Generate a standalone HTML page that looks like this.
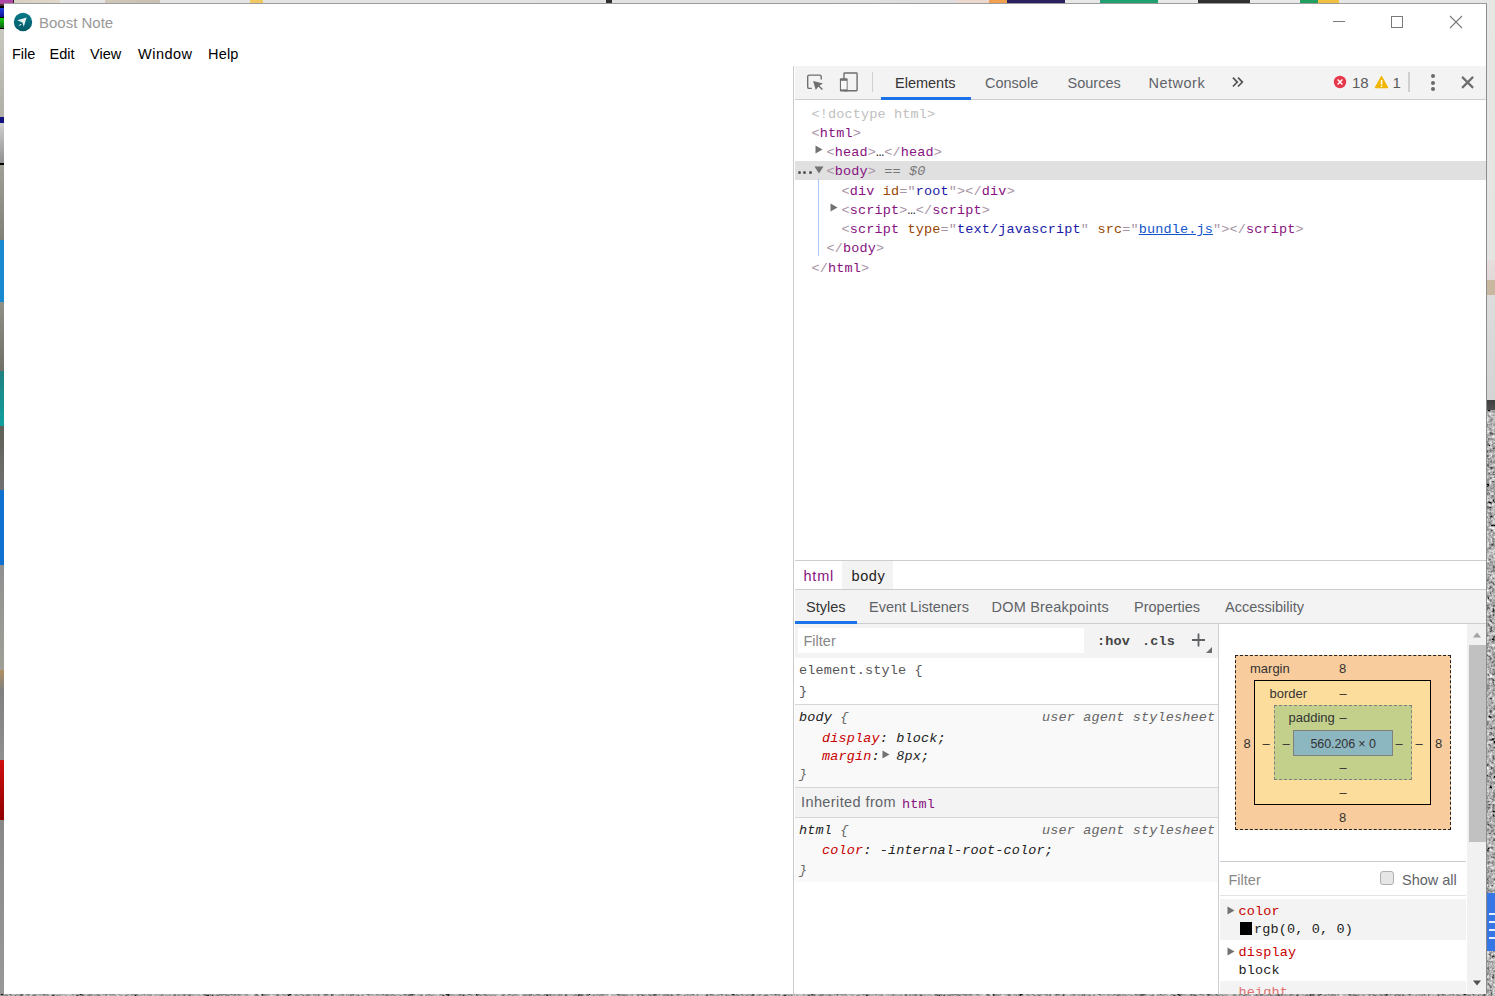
<!DOCTYPE html>
<html><head><meta charset="utf-8"><title>Boost Note</title>
<style>
html,body{margin:0;padding:0;width:1495px;height:996px;overflow:hidden;background:#909090;}
.t{position:absolute;white-space:pre;}
</style></head><body>
<div style="position:absolute;left:0px;top:0px;width:4px;height:996px;background:linear-gradient(to bottom,#b048a8 0px,#b048a8 4px,#503038 4px,#503038 6px,#000 6px,#000 8px,#2040e0 8px,#101090 17px,#000 17px,#000 18px,#10d010 18px,#106010 28px,#000 28px,#000 29px,#c8c8c0 29px,#b0b0a8 117px,#101080 117px,#101080 123px,#d0d0d0 123px,#909090 163px,#000 163px,#000 165px,#a0a098 165px,#808078 240px,#1888d0 240px,#1888d0 302px,#909088 302px,#707068 371px,#208080 371px,#10a0a0 426px,#606058 426px,#707070 490px,#1070d0 490px,#1070d0 565px,#909090 565px,#a0a098 670px,#b09060 670px,#808080 690px,#909090 760px,#d01010 760px,#900000 820px,#888 820px,#999 996px)"></div>
<div style="position:absolute;left:0px;top:0px;width:1495px;height:3px;background:linear-gradient(to right,#b048a8 0,#b048a8 13px,#222 13px,#222 14px,#d8d0c0 14px,#e0d8c8 60px,#e6e6e6 60px,#e6e6e6 105px,#d0c8b8 105px,#c8c0b0 160px,#e4e4e4 160px,#e4e4e4 250px,#f0c860 250px,#f0c860 263px,#e6e4e2 263px,#e4e2e0 606px,#303030 606px,#303030 612px,#e2e2e0 612px,#e0dedc 957px,#ecd8d0 957px,#ecd8d0 989px,#f0a050 989px,#f0a050 1007px,#2a2060 1007px,#2a2060 1065px,#e8e8e8 1065px,#e8e8e8 1100px,#20a070 1100px,#20a070 1158px,#e8e8e8 1158px,#e8e8e8 1198px,#303030 1198px,#303030 1250px,#e8e8e8 1250px,#e8e8e8 1300px,#20a060 1300px,#20a060 1318px,#f0c040 1318px,#f0c040 1339px,#e6e6e6 1339px,#e6e6e6 1495px)"></div>
<div style="position:absolute;left:1487px;top:0px;width:8px;height:996px;background:linear-gradient(to bottom,#e6e6e4 0,#e4e4e2 260px,#e8dcdc 260px,#e0d8d8 280px,#c8b8a0 280px,#c8b8a0 295px,#dcdcdc 295px,#d4d4d4 400px,#404040 400px,#505050 410px,#a0a0a0 410px,#a0a0a0 996px)"></div>
<svg style="position:absolute;left:1487px;top:410px" width="8" height="586"><filter id="gr" x="0" y="0" width="100%" height="100%"><feTurbulence type="fractalNoise" baseFrequency="0.35" numOctaves="3" seed="3"/><feColorMatrix type="matrix" values="0.33 0.33 0.33 0 0.05  0.33 0.33 0.33 0 0.05  0.33 0.33 0.33 0 0.05  0 0 0 0 1"/><feComponentTransfer><feFuncR type="linear" slope="2.4" intercept="-0.88"/><feFuncG type="linear" slope="2.4" intercept="-0.88"/><feFuncB type="linear" slope="2.4" intercept="-0.88"/></feComponentTransfer></filter><rect width="8" height="586" filter="url(#gr)"/></svg>
<div style="position:absolute;left:1487px;top:893px;width:8px;height:58px;background:#3776e6"></div>
<div style="position:absolute;left:1489px;top:913px;width:6px;height:2px;background:#e8f0ff"></div>
<div style="position:absolute;left:1489px;top:921px;width:6px;height:2px;background:#e8f0ff"></div>
<div style="position:absolute;left:1489px;top:929px;width:6px;height:2px;background:#e8f0ff"></div>
<div style="position:absolute;left:1489px;top:937px;width:6px;height:2px;background:#e8f0ff"></div>
<svg style="position:absolute;left:0;top:994px" width="1495" height="2"><rect width="1495" height="2" fill="#7a7a78"/><rect width="1495" height="2" filter="url(#gr)" opacity="0.8"/></svg>
<div style="position:absolute;left:4px;top:3px;width:1483px;height:991px;background:#fff;border-top:1px solid #9c9c9c;border-right:1px solid #8c8c8c;box-sizing:border-box"></div>
<svg style="position:absolute;left:13px;top:12px" width="20" height="20" viewBox="0 0 20 20"><defs><linearGradient id="ig" x1="0" y1="0" x2="0" y2="1"><stop offset="0" stop-color="#047a88"/><stop offset="1" stop-color="#035a68"/></linearGradient></defs><circle cx="10" cy="10" r="9.2" fill="url(#ig)"/><path d="M4.2 8.2 L13.6 5.4 L10.8 14.8 L9.4 10.6 Z" fill="#e8f2f2"/><path d="M5.2 14.6 L7.3 11.9 L8.9 12.6 Z" fill="#e8f2f2"/></svg>
<div class="t" style="left:39px;top:15.00px;font-family:'Liberation Sans', sans-serif;font-size:15px;line-height:15px;color:#999;letter-spacing:0px;">Boost Note</div>
<div style="position:absolute;left:1333px;top:21px;width:12px;height:1px;background:#7a7a7a"></div>
<div style="position:absolute;left:1391px;top:16px;width:12px;height:12px;border:1px solid #7a7a7a;box-sizing:border-box"></div>
<svg style="position:absolute;left:1449px;top:15px" width="14" height="14" viewBox="0 0 14 14"><path d="M1 1L13 13M13 1L1 13" stroke="#7a7a7a" stroke-width="1.1"/></svg>
<div class="t" style="left:12px;top:47.00px;font-family:'Liberation Sans', sans-serif;font-size:14.5px;line-height:14.5px;color:#000;letter-spacing:0px;">File</div>
<div class="t" style="left:49.5px;top:47.00px;font-family:'Liberation Sans', sans-serif;font-size:14.5px;line-height:14.5px;color:#000;letter-spacing:0px;">Edit</div>
<div class="t" style="left:90px;top:47.00px;font-family:'Liberation Sans', sans-serif;font-size:14.5px;line-height:14.5px;color:#000;letter-spacing:0px;">View</div>
<div class="t" style="left:138px;top:47.00px;font-family:'Liberation Sans', sans-serif;font-size:14.5px;line-height:14.5px;color:#000;letter-spacing:0.5px;">Window</div>
<div class="t" style="left:208px;top:47.00px;font-family:'Liberation Sans', sans-serif;font-size:14.5px;line-height:14.5px;color:#000;letter-spacing:0.2px;">Help</div>
<div style="position:absolute;left:793px;top:66px;width:1px;height:928px;background:#cbcbcb"></div>
<div style="position:absolute;left:795px;top:66px;width:691px;height:33px;background:#f3f3f3"></div>
<div style="position:absolute;left:795px;top:99px;width:691px;height:1px;background:#cacdd1"></div>
<svg style="position:absolute;left:805px;top:72px" width="22" height="22" viewBox="0 0 22 22"><path d="M6.8 16.4 H4.2 Q2.7 16.4 2.7 14.9 V4.6 Q2.7 3.1 4.2 3.1 H14.7 Q16.2 3.1 16.2 4.6 V7.6" fill="none" stroke="#6e6e6e" stroke-width="1.4"/><path d="M8.1 9.1 L18 11.6 L14.4 13.4 L17.9 16.9 L16.9 17.9 L13.4 14.4 L10.8 18 Z" fill="#6e6e6e"/></svg>
<svg style="position:absolute;left:837px;top:70px" width="24" height="24" viewBox="0 0 24 24"><rect x="7.0" y="3.0" width="13.1" height="17.8" rx="0.7" fill="none" stroke="#6e6e6e" stroke-width="1.4"/><rect x="2.9" y="8.2" width="7.7" height="13.3" rx="1" fill="#6e6e6e"/><rect x="4.0" y="10.8" width="5.7" height="8.6" fill="#f8f8f8"/></svg>
<div style="position:absolute;left:872px;top:72px;width:1px;height:20px;background:#d0d0d0"></div>
<div class="t" style="left:895px;top:76.00px;font-family:'Liberation Sans', sans-serif;font-size:14.5px;line-height:14.5px;color:#333;letter-spacing:0px;">Elements</div>
<div class="t" style="left:985px;top:76.00px;font-family:'Liberation Sans', sans-serif;font-size:14.5px;line-height:14.5px;color:#5f6368;letter-spacing:0px;">Console</div>
<div class="t" style="left:1067.5px;top:76.00px;font-family:'Liberation Sans', sans-serif;font-size:14.5px;line-height:14.5px;color:#5f6368;letter-spacing:0px;">Sources</div>
<div class="t" style="left:1148.5px;top:76.00px;font-family:'Liberation Sans', sans-serif;font-size:14.5px;line-height:14.5px;color:#5f6368;letter-spacing:0.5px;">Network</div>
<svg style="position:absolute;left:1230px;top:74px" width="16" height="16" viewBox="0 0 16 16"><path d="M2.9 3.7 L7.3 8.1 L2.9 12.5 M8.0 3.7 L12.4 8.1 L8.0 12.5" fill="none" stroke="#555" stroke-width="1.7"/></svg>
<div style="position:absolute;left:881px;top:97px;width:90px;height:3px;background:#1a73e8"></div>
<svg style="position:absolute;left:1333px;top:75px" width="14" height="14" viewBox="0 0 14 14"><circle cx="7" cy="7" r="6.2" fill="#e5384a"/><path d="M4.6 4.6L9.4 9.4M9.4 4.6L4.6 9.4" stroke="#fff" stroke-width="1.4"/></svg>
<div class="t" style="left:1352px;top:75.00px;font-family:'Liberation Sans', sans-serif;font-size:15px;line-height:15px;color:#5a5a5a;letter-spacing:0px;">18</div>
<svg style="position:absolute;left:1374px;top:75px" width="15" height="14" viewBox="0 0 15 14"><path d="M7.5 1.6 L13.6 12.6 H1.4 Z" fill="#f2b600" stroke="#f2b600" stroke-width="1.2" stroke-linejoin="round"/><rect x="6.8" y="5" width="1.5" height="4.6" fill="#fff"/><rect x="6.8" y="10.6" width="1.5" height="1.4" fill="#fff"/></svg>
<div class="t" style="left:1392.5px;top:75.00px;font-family:'Liberation Sans', sans-serif;font-size:15px;line-height:15px;color:#5a5a5a;letter-spacing:0px;">1</div>
<div style="position:absolute;left:1408px;top:72px;width:2px;height:20px;background:#d0d0d0"></div>
<div style="position:absolute;left:1431px;top:74.3px;width:4px;height:4px;background:#6a6a6a;border-radius:50%"></div>
<div style="position:absolute;left:1431px;top:80.6px;width:4px;height:4px;background:#6a6a6a;border-radius:50%"></div>
<div style="position:absolute;left:1431px;top:87px;width:4px;height:4px;background:#6a6a6a;border-radius:50%"></div>
<svg style="position:absolute;left:1460px;top:75px" width="15" height="14" viewBox="0 0 15 14"><path d="M2.1 1.9 L13.1 12.9 M13.1 1.9 L2.1 12.9" stroke="#6e6e6e" stroke-width="2.2"/></svg>
<div style="position:absolute;left:795px;top:161px;width:691px;height:18.5px;background:#e0e0e0"></div>
<div style="position:absolute;left:818px;top:179px;width:1px;height:77px;background:#a9c6f8"></div>
<div class="t" style="left:811.5px;top:108.00px;font-family:'Liberation Mono', monospace;font-size:13.5px;line-height:13.5px;color:#c0c0c0;letter-spacing:0.15px;">&lt;!doctype html&gt;</div>
<div class="t" style="left:811.5px;top:127.00px;font-family:'Liberation Mono', monospace;font-size:13.5px;line-height:13.5px;color:#333;letter-spacing:0.15px;"><span style="color:#a894a6">&lt;</span><span style="color:#881280">html</span><span style="color:#a894a6">&gt;</span></div>
<div class="t" style="left:826.5px;top:146.00px;font-family:'Liberation Mono', monospace;font-size:13.5px;line-height:13.5px;color:#333;letter-spacing:0.15px;"><span style="color:#a894a6">&lt;</span><span style="color:#881280">head</span><span style="color:#a894a6">&gt;</span><span style="color:#222">…</span><span style="color:#a894a6">&lt;/</span><span style="color:#881280">head</span><span style="color:#a894a6">&gt;</span></div>
<div class="t" style="left:826.5px;top:165.00px;font-family:'Liberation Mono', monospace;font-size:13.5px;line-height:13.5px;color:#333;letter-spacing:0.15px;"><span style="color:#a894a6">&lt;</span><span style="color:#881280">body</span><span style="color:#a894a6">&gt;</span><span style="color:#777"> == <i>$0</i></span></div>
<div class="t" style="left:841.5px;top:185.00px;font-family:'Liberation Mono', monospace;font-size:13.5px;line-height:13.5px;color:#333;letter-spacing:0.15px;"><span style="color:#a894a6">&lt;</span><span style="color:#881280">div</span> <span style="color:#994500">id</span><span style="color:#a894a6">="</span><span style="color:#1a1aa6">root</span><span style="color:#a894a6">"&gt;&lt;/</span><span style="color:#881280">div</span><span style="color:#a894a6">&gt;</span></div>
<div class="t" style="left:841.5px;top:204.00px;font-family:'Liberation Mono', monospace;font-size:13.5px;line-height:13.5px;color:#333;letter-spacing:0.15px;"><span style="color:#a894a6">&lt;</span><span style="color:#881280">script</span><span style="color:#a894a6">&gt;</span><span style="color:#222">…</span><span style="color:#a894a6">&lt;/</span><span style="color:#881280">script</span><span style="color:#a894a6">&gt;</span></div>
<div class="t" style="left:841.5px;top:223.00px;font-family:'Liberation Mono', monospace;font-size:13.5px;line-height:13.5px;color:#333;letter-spacing:0.15px;"><span style="color:#a894a6">&lt;</span><span style="color:#881280">script</span> <span style="color:#994500">type</span><span style="color:#a894a6">="</span><span style="color:#1a1aa6">text/javascript</span><span style="color:#a894a6">"</span> <span style="color:#994500">src</span><span style="color:#a894a6">="</span><span style="color:#1155cc;text-decoration:underline">bundle.js</span><span style="color:#a894a6">"&gt;&lt;/</span><span style="color:#881280">script</span><span style="color:#a894a6">&gt;</span></div>
<div class="t" style="left:826.5px;top:242.00px;font-family:'Liberation Mono', monospace;font-size:13.5px;line-height:13.5px;color:#333;letter-spacing:0.15px;"><span style="color:#a894a6">&lt;/</span><span style="color:#881280">body</span><span style="color:#a894a6">&gt;</span></div>
<div class="t" style="left:811.5px;top:262.00px;font-family:'Liberation Mono', monospace;font-size:13.5px;line-height:13.5px;color:#333;letter-spacing:0.15px;"><span style="color:#a894a6">&lt;/</span><span style="color:#881280">html</span><span style="color:#a894a6">&gt;</span></div>
<svg style="position:absolute;left:815px;top:145px" width="8" height="9" viewBox="0 0 8 9"><path d="M0.5 0.5 L7.5 4.5 L0.5 8.5Z" fill="#727272"/></svg>
<svg style="position:absolute;left:814px;top:166px" width="10" height="8" viewBox="0 0 10 8"><path d="M0.5 0.5 H9.5 L5 7.5Z" fill="#727272"/></svg>
<svg style="position:absolute;left:830px;top:203px" width="8" height="9" viewBox="0 0 8 9"><path d="M0.5 0.5 L7.5 4.5 L0.5 8.5Z" fill="#727272"/></svg>
<div style="position:absolute;left:798px;top:171px;width:3px;height:3px;background:#555;border-radius:50%"></div>
<div style="position:absolute;left:803px;top:171px;width:3px;height:3px;background:#555;border-radius:50%"></div>
<div style="position:absolute;left:808.5px;top:171px;width:3px;height:3px;background:#555;border-radius:50%"></div>
<div style="position:absolute;left:795px;top:560px;width:691px;height:1px;background:#cacdd1"></div>
<div style="position:absolute;left:842px;top:561px;width:51px;height:28px;background:#f3f3f3"></div>
<div class="t" style="left:803.5px;top:569.00px;font-family:'Liberation Sans', sans-serif;font-size:14.5px;line-height:14.5px;color:#881280;letter-spacing:0.8px;">html</div>
<div class="t" style="left:851.5px;top:569.00px;font-family:'Liberation Sans', sans-serif;font-size:14.5px;line-height:14.5px;color:#222;letter-spacing:0.6px;">body</div>
<div style="position:absolute;left:795px;top:589px;width:691px;height:1px;background:#cacdd1"></div>
<div style="position:absolute;left:795px;top:590px;width:691px;height:33px;background:#f3f3f3"></div>
<div style="position:absolute;left:795px;top:623px;width:691px;height:1px;background:#cacdd1"></div>
<div style="position:absolute;left:795px;top:621px;width:62px;height:3px;background:#1a73e8"></div>
<div class="t" style="left:806px;top:600.00px;font-family:'Liberation Sans', sans-serif;font-size:14.5px;line-height:14.5px;color:#333;letter-spacing:0px;">Styles</div>
<div class="t" style="left:869px;top:600.00px;font-family:'Liberation Sans', sans-serif;font-size:14.5px;line-height:14.5px;color:#5f6368;letter-spacing:0px;">Event Listeners</div>
<div class="t" style="left:991.5px;top:600.00px;font-family:'Liberation Sans', sans-serif;font-size:14.5px;line-height:14.5px;color:#5f6368;letter-spacing:0.2px;">DOM Breakpoints</div>
<div class="t" style="left:1134px;top:600.00px;font-family:'Liberation Sans', sans-serif;font-size:14.5px;line-height:14.5px;color:#5f6368;letter-spacing:0px;">Properties</div>
<div class="t" style="left:1225px;top:600.00px;font-family:'Liberation Sans', sans-serif;font-size:14.5px;line-height:14.5px;color:#5f6368;letter-spacing:0px;">Accessibility</div>
<div style="position:absolute;left:795px;top:624px;width:423px;height:34px;background:#f3f3f3"></div>
<div style="position:absolute;left:798px;top:628px;width:286px;height:25px;background:#fff"></div>
<div class="t" style="left:803.5px;top:634.00px;font-family:'Liberation Sans', sans-serif;font-size:14.5px;line-height:14.5px;color:#888;letter-spacing:0px;">Filter</div>
<div class="t" style="left:1097px;top:635.00px;font-family:'Liberation Mono', monospace;font-size:13.5px;line-height:13.5px;color:#444;letter-spacing:0.15px;font-weight:bold">:hov</div>
<div class="t" style="left:1142px;top:635.00px;font-family:'Liberation Mono', monospace;font-size:13.5px;line-height:13.5px;color:#444;letter-spacing:0.15px;font-weight:bold">.cls</div>
<svg style="position:absolute;left:1190px;top:632px" width="24" height="22" viewBox="0 0 24 22"><path d="M8.5 1.5 V14.5 M2 8 H15" stroke="#5f6368" stroke-width="1.8"/><path d="M22 15 V21 H16 Z" fill="#6e6e6e"/></svg>
<div style="position:absolute;left:1218px;top:624px;width:1px;height:370px;background:#cacdd1"></div>
<div class="t" style="left:799px;top:664.00px;font-family:'Liberation Mono', monospace;font-size:13.5px;line-height:13.5px;color:#555;letter-spacing:0.15px;">element.style {</div>
<div class="t" style="left:799px;top:685.00px;font-family:'Liberation Mono', monospace;font-size:13.5px;line-height:13.5px;color:#555;letter-spacing:0.15px;">}</div>
<div style="position:absolute;left:795px;top:704px;width:423px;height:1px;background:#d6d6d6"></div>
<div style="position:absolute;left:795px;top:705px;width:423px;height:82px;background:#f9f9f9"></div>
<div class="t" style="left:799px;top:711.00px;font-family:'Liberation Mono', monospace;font-size:13.5px;line-height:13.5px;color:#222;letter-spacing:0.15px;font-style:italic">body <span style="color:#666">{</span></div>
<div class="t" style="left:1042px;top:711.00px;font-family:'Liberation Mono', monospace;font-size:13.5px;line-height:13.5px;color:#666;letter-spacing:0.15px;font-style:italic">user agent stylesheet</div>
<div class="t" style="left:822px;top:732.00px;font-family:'Liberation Mono', monospace;font-size:13.5px;line-height:13.5px;color:#222;letter-spacing:0.15px;font-style:italic"><span style="color:#c80000">display</span>: block;</div>
<div class="t" style="left:822px;top:750.00px;font-family:'Liberation Mono', monospace;font-size:13.5px;line-height:13.5px;color:#222;letter-spacing:0.15px;font-style:italic"><span style="color:#c80000">margin</span>:&nbsp;&nbsp;8px;</div>
<svg style="position:absolute;left:882px;top:750px" width="8" height="9" viewBox="0 0 8 9"><path d="M0.5 0.5 L7.5 4.5 L0.5 8.5Z" fill="#727272"/></svg>
<div class="t" style="left:799px;top:768.00px;font-family:'Liberation Mono', monospace;font-size:13.5px;line-height:13.5px;color:#222;letter-spacing:0.15px;font-style:italic"><span style="color:#666">}</span></div>
<div style="position:absolute;left:795px;top:787px;width:423px;height:1px;background:#d6d6d6"></div>
<div style="position:absolute;left:795px;top:788px;width:423px;height:29px;background:#f3f3f3"></div>
<div class="t" style="left:801px;top:795.00px;font-family:'Liberation Sans', sans-serif;font-size:14.5px;line-height:14.5px;color:#5f6368;letter-spacing:0.4px;">Inherited from</div>
<div class="t" style="left:902px;top:798.00px;font-family:'Liberation Mono', monospace;font-size:13.5px;line-height:13.5px;color:#881280;letter-spacing:0.15px;">html</div>
<div style="position:absolute;left:795px;top:817px;width:423px;height:1px;background:#d6d6d6"></div>
<div style="position:absolute;left:795px;top:818px;width:423px;height:64px;background:#f9f9f9"></div>
<div class="t" style="left:799px;top:824.00px;font-family:'Liberation Mono', monospace;font-size:13.5px;line-height:13.5px;color:#222;letter-spacing:0.15px;font-style:italic">html <span style="color:#666">{</span></div>
<div class="t" style="left:1042px;top:824.00px;font-family:'Liberation Mono', monospace;font-size:13.5px;line-height:13.5px;color:#666;letter-spacing:0.15px;font-style:italic">user agent stylesheet</div>
<div class="t" style="left:822px;top:844.00px;font-family:'Liberation Mono', monospace;font-size:13.5px;line-height:13.5px;color:#222;letter-spacing:0.15px;font-style:italic"><span style="color:#c80000">color</span>: -internal-root-color;</div>
<div class="t" style="left:799px;top:864.00px;font-family:'Liberation Mono', monospace;font-size:13.5px;line-height:13.5px;color:#222;letter-spacing:0.15px;font-style:italic"><span style="color:#666">}</span></div>
<div style="position:absolute;left:1467px;top:624px;width:19px;height:370px;background:#f1f1f1"></div>
<div style="position:absolute;left:1469px;top:645px;width:17px;height:197px;background:#c1c1c1"></div>
<svg style="position:absolute;left:1472px;top:631px" width="10" height="8" viewBox="0 0 10 8"><path d="M1 6.5 L5 1.5 L9 6.5Z" fill="#a3a3a3"/></svg>
<svg style="position:absolute;left:1472px;top:979px" width="10" height="8" viewBox="0 0 10 8"><path d="M1 1.5 L9 1.5 L5 6.5Z" fill="#505050"/></svg>
<div style="position:absolute;left:1235px;top:655px;width:216px;height:175px;background:#f9cc9d;border:1px dashed #222;box-sizing:border-box"></div>
<div style="position:absolute;left:1254px;top:680px;width:177px;height:125px;background:#fddd9b;border:1px solid #000;box-sizing:border-box"></div>
<div style="position:absolute;left:1274px;top:705px;width:138px;height:75px;background:#c3d08b;border:1px dashed #808080;box-sizing:border-box"></div>
<div style="position:absolute;left:1293px;top:730px;width:100px;height:26px;background:#8cb6c0;border:1px solid #808080;box-sizing:border-box"></div>
<div class="t" style="left:1250px;top:662.00px;font-family:'Liberation Sans', sans-serif;font-size:13px;line-height:13px;color:#333;letter-spacing:0px;">margin</div>
<div class="t" style="left:1339px;top:662.00px;font-family:'Liberation Sans', sans-serif;font-size:13px;line-height:13px;color:#333;letter-spacing:0px;">8</div>
<div class="t" style="left:1269.5px;top:687.00px;font-family:'Liberation Sans', sans-serif;font-size:13px;line-height:13px;color:#333;letter-spacing:0px;">border</div>
<div class="t" style="left:1339.5px;top:687.00px;font-family:'Liberation Sans', sans-serif;font-size:13px;line-height:13px;color:#333;letter-spacing:0px;">–</div>
<div class="t" style="left:1288.5px;top:711.00px;font-family:'Liberation Sans', sans-serif;font-size:13px;line-height:13px;color:#333;letter-spacing:0px;">padding</div>
<div class="t" style="left:1339.5px;top:711.00px;font-family:'Liberation Sans', sans-serif;font-size:13px;line-height:13px;color:#333;letter-spacing:0px;">–</div>
<div class="t" style="left:1310.5px;top:738.00px;font-family:'Liberation Sans', sans-serif;font-size:12.5px;line-height:12.5px;color:#333;letter-spacing:-0.1px;">560.206 × 0</div>
<div class="t" style="left:1243.5px;top:737.00px;font-family:'Liberation Sans', sans-serif;font-size:13px;line-height:13px;color:#333;letter-spacing:0px;">8</div>
<div class="t" style="left:1262.5px;top:737.00px;font-family:'Liberation Sans', sans-serif;font-size:13px;line-height:13px;color:#333;letter-spacing:0px;">–</div>
<div class="t" style="left:1282.5px;top:737.00px;font-family:'Liberation Sans', sans-serif;font-size:13px;line-height:13px;color:#333;letter-spacing:0px;">–</div>
<div class="t" style="left:1395.5px;top:737.00px;font-family:'Liberation Sans', sans-serif;font-size:13px;line-height:13px;color:#333;letter-spacing:0px;">–</div>
<div class="t" style="left:1415.5px;top:737.00px;font-family:'Liberation Sans', sans-serif;font-size:13px;line-height:13px;color:#333;letter-spacing:0px;">–</div>
<div class="t" style="left:1435px;top:737.00px;font-family:'Liberation Sans', sans-serif;font-size:13px;line-height:13px;color:#333;letter-spacing:0px;">8</div>
<div class="t" style="left:1339.5px;top:761.00px;font-family:'Liberation Sans', sans-serif;font-size:13px;line-height:13px;color:#333;letter-spacing:0px;">–</div>
<div class="t" style="left:1339.5px;top:786.00px;font-family:'Liberation Sans', sans-serif;font-size:13px;line-height:13px;color:#333;letter-spacing:0px;">–</div>
<div class="t" style="left:1339px;top:811.00px;font-family:'Liberation Sans', sans-serif;font-size:13px;line-height:13px;color:#333;letter-spacing:0px;">8</div>
<div style="position:absolute;left:1220px;top:861px;width:246px;height:1px;background:#cacdd1"></div>
<div class="t" style="left:1228.5px;top:873.00px;font-family:'Liberation Sans', sans-serif;font-size:14.5px;line-height:14.5px;color:#888;letter-spacing:0px;">Filter</div>
<div style="position:absolute;left:1380px;top:871px;width:14px;height:14px;background:#e6e6e6;border:1px solid #b0b0b0;border-radius:3px;box-sizing:border-box"></div>
<div class="t" style="left:1402px;top:873.00px;font-family:'Liberation Sans', sans-serif;font-size:14.5px;line-height:14.5px;color:#5f6368;letter-spacing:0px;">Show all</div>
<div style="position:absolute;left:1220px;top:895px;width:246px;height:1px;background:#e4e4e4"></div>
<div style="position:absolute;left:1220px;top:899px;width:246px;height:41px;background:#f3f3f3"></div>
<svg style="position:absolute;left:1227px;top:906px" width="8" height="9" viewBox="0 0 8 9"><path d="M0.5 0.5 L7.5 4.5 L0.5 8.5Z" fill="#727272"/></svg>
<div class="t" style="left:1238.5px;top:905.00px;font-family:'Liberation Mono', monospace;font-size:13.5px;line-height:13.5px;color:#c80000;letter-spacing:0.15px;">color</div>
<div style="position:absolute;left:1240px;top:922px;width:12px;height:13px;background:#000"></div>
<div class="t" style="left:1254px;top:923.00px;font-family:'Liberation Mono', monospace;font-size:13.5px;line-height:13.5px;color:#222;letter-spacing:0.15px;">rgb(0, 0, 0)</div>
<svg style="position:absolute;left:1227px;top:947px" width="8" height="9" viewBox="0 0 8 9"><path d="M0.5 0.5 L7.5 4.5 L0.5 8.5Z" fill="#727272"/></svg>
<div class="t" style="left:1238.5px;top:946.00px;font-family:'Liberation Mono', monospace;font-size:13.5px;line-height:13.5px;color:#c80000;letter-spacing:0.15px;">display</div>
<div class="t" style="left:1238.5px;top:964.00px;font-family:'Liberation Mono', monospace;font-size:13.5px;line-height:13.5px;color:#222;letter-spacing:0.15px;">block</div>
<div style="position:absolute;left:1220px;top:981px;width:246px;height:13px;background:#f3f3f3;overflow:hidden"></div>
<div class="t" style="left:1238.5px;top:986.00px;font-family:'Liberation Mono', monospace;font-size:13.5px;line-height:13.5px;color:#e07070;letter-spacing:0.15px;">height</div>
<svg style="position:absolute;left:0;top:994px" width="1495" height="2"><rect width="1495" height="2" fill="#7a7a78"/><rect width="1495" height="2" filter="url(#gr)" opacity="0.8"/></svg>
</body></html>
